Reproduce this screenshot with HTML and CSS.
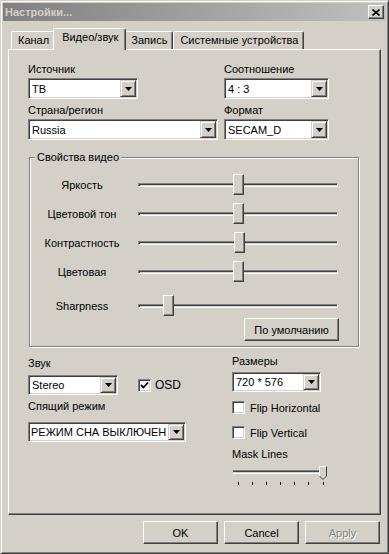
FILE: index.html
```html
<!DOCTYPE html>
<html lang="ru">
<head>
    <meta charset="UTF-8">
    <title>Настройки...</title>
    <link rel="stylesheet" href="styles.css">
</head>
<body>
    <div class="window">
        <!-- Title bar -->
        <div class="titlebar">
            <span class="title">Настройки...</span>
            <div class="close-btn">
                <svg width="8" height="7" viewBox="0 0 8 7"><path d="M0.5 0.5 L7.5 6.5 M7.5 0.5 L0.5 6.5" stroke="#000" stroke-width="1.6"/></svg>
            </div>
        </div>

        <!-- Tabs -->
        <div class="tabs">
            <div class="tab">Канал</div>
            <div class="tab active">Видео/звук</div>
            <div class="tab">Запись</div>
            <div class="tab">Системные устройства</div>
        </div>

        <div class="panel">
            <div class="top-fields">
                <div class="field">
                    <div class="label">Источник</div>
                    <div class="combo w-src"><span class="combo-text">ТВ</span><span class="combo-btn"><svg width="7" height="4"><polygon points="0,0 7,0 3.5,4" fill="#000"/></svg></span></div>
                </div>
                <div class="field">
                    <div class="label">Соотношение</div>
                    <div class="combo"><span class="combo-text">4 : 3</span><span class="combo-btn"><svg width="7" height="4"><polygon points="0,0 7,0 3.5,4" fill="#000"/></svg></span></div>
                </div>
                <div class="field">
                    <div class="label">Страна/регион</div>
                    <div class="combo"><span class="combo-text">Russia</span><span class="combo-btn"><svg width="7" height="4"><polygon points="0,0 7,0 3.5,4" fill="#000"/></svg></span></div>
                </div>
                <div class="field">
                    <div class="label">Формат</div>
                    <div class="combo"><span class="combo-text">SECAM_D</span><span class="combo-btn"><svg width="7" height="4"><polygon points="0,0 7,0 3.5,4" fill="#000"/></svg></span></div>
                </div>
            </div>

            <!-- Video properties -->
            <fieldset class="group">
                <legend>Свойства видео</legend>
                <div class="slider-row">
                    <span class="slider-label">Яркость</span>
                    <div class="slider"><div class="track"></div><div class="thumb" style="left: 95px"></div></div>
                </div>
                <div class="slider-row">
                    <span class="slider-label">Цветовой тон</span>
                    <div class="slider"><div class="track"></div><div class="thumb" style="left: 95px"></div></div>
                </div>
                <div class="slider-row">
                    <span class="slider-label">Контрастность</span>
                    <div class="slider"><div class="track"></div><div class="thumb" style="left: 96px"></div></div>
                </div>
                <div class="slider-row">
                    <span class="slider-label">Цветовая</span>
                    <div class="slider"><div class="track"></div><div class="thumb" style="left: 95px"></div></div>
                </div>
                <div class="slider-row last">
                    <span class="slider-label">Sharpness</span>
                    <div class="slider"><div class="track"></div><div class="thumb" style="left: 25px"></div></div>
                </div>
                <div class="group-footer">
                    <div class="btn btn-default">По умолчанию</div>
                </div>
            </fieldset>

            <div class="bottom">
                <div class="col-left">
                    <div class="label">Звук</div>
                    <div class="combo-row">
                        <div class="combo small w-sound"><span class="combo-text">Stereo</span><span class="combo-btn"><svg width="7" height="4"><polygon points="0,0 7,0 3.5,4" fill="#000"/></svg></span></div>
                        <div class="check-row osd">
                            <span class="checkbox"><svg width="9" height="9"><polyline points="1,4 3.5,6.5 8,1.5" fill="none" stroke="#000" stroke-width="1.8"/></svg></span>
                            <span>OSD</span>
                        </div>
                    </div>
                    <div class="label sleep-label">Спящий режим</div>
                    <div class="combo small w-sleep"><span class="combo-text">РЕЖИМ СНА ВЫКЛЮЧЕН</span><span class="combo-btn"><svg width="7" height="4"><polygon points="0,0 7,0 3.5,4" fill="#000"/></svg></span></div>
                </div>
                <div class="col-right">
                    <div class="label">Размеры</div>
                    <div class="combo small w-size"><span class="combo-text">720 * 576</span><span class="combo-btn"><svg width="7" height="4"><polygon points="0,0 7,0 3.5,4" fill="#000"/></svg></span></div>
                    <div class="check-row flip-h"><span class="checkbox"></span><span>Flip Horizontal</span></div>
                    <div class="check-row flip-v"><span class="checkbox"></span><span>Flip Vertical</span></div>
                    <div class="label mask-label">Mask Lines</div>
                    <svg class="mask-slider" width="96" height="21" viewBox="0 0 96 21" shape-rendering="crispEdges">
                        <rect x="1" y="5" width="92" height="1" fill="#808080"/>
                        <rect x="1" y="6" width="92" height="1" fill="#404040"/>
                        <rect x="1" y="7" width="92" height="1" fill="#d4d0c8"/>
                        <rect x="1" y="8" width="92" height="1" fill="#fff"/>
                        <polygon points="87,1 95,1 95,11 91,15 87,11" fill="#d4d0c8" shape-rendering="auto"/>
                        <polyline points="87.5,11 87.5,1.5 94.5,1.5" fill="none" stroke="#fff" stroke-width="1" shape-rendering="auto"/>
                        <polyline points="94.5,1.5 94.5,11 91,14.5 87.5,11" fill="none" stroke="#404040" stroke-width="1" shape-rendering="auto"/>
                        <g fill="#000">
                            <rect x="6" y="17" width="1" height="3"/>
                            <rect x="20" y="17" width="1" height="3"/>
                            <rect x="34" y="17" width="1" height="3"/>
                            <rect x="48" y="17" width="1" height="3"/>
                            <rect x="62" y="17" width="1" height="3"/>
                            <rect x="76" y="17" width="1" height="3"/>
                            <rect x="91" y="17" width="1" height="3"/>
                        </g>
                    </svg>
                </div>
            </div>
        </div>

        <!-- Dialog buttons -->
        <div class="dialog-buttons">
            <div class="btn">OK</div>
            <div class="btn">Cancel</div>
            <div class="btn disabled">Apply</div>
        </div>
    </div>
</body>
</html>
```

FILE: styles.css
```css
* {
    margin: 0;
    padding: 0;
    box-sizing: border-box;
}

body {
    background: #d4d0c8;
    font-family: 'Liberation Sans', Arial, sans-serif;
    font-size: 11px;
    color: #000;
}

/* Window frame */
.window {
    width: 389px;
    height: 554px;
    background: #d4d0c8;
    border: 1px solid;
    border-color: #d4d0c8 #404040 #404040 #d4d0c8;
    box-shadow: inset 1px 1px #fff, inset -1px -1px #808080;
    padding: 2px;
    display: flex;
    flex-direction: column;
}

/* Title bar */
.titlebar {
    height: 18px;
    flex: none;
    display: flex;
    align-items: center;
    padding-left: 2px;
    background: linear-gradient(to right, #808080, #c0c0c0);
}

.title {
    font-weight: bold;
    color: #d4d0c8;
    font-size: 11px;
}

.close-btn {
    margin-left: auto;
    margin-right: 2px;
    width: 16px;
    height: 14px;
    display: flex;
    align-items: center;
    justify-content: center;
    background: #d4d0c8;
    border: 1px solid;
    border-color: #fff #404040 #404040 #fff;
    box-shadow: inset -1px -1px #808080;
}

/* Tabs */
.tabs {
    display: flex;
    align-items: flex-end;
    height: 21px;
    margin: 7px 0 0 8px;
    flex: none;
}

.tab {
    height: 18px;
    line-height: 16px;
    padding: 0 5px 0 6px;
    border-top: 1px solid #fff;
    border-left: 1px solid #fff;
    border-right: 1px solid #404040;
    border-radius: 2px 2px 0 0;
    box-shadow: inset -1px 0 #808080;
    white-space: nowrap;
}

.tab.active {
    height: 22px;
    margin: 0 -2px -1px;
    padding: 0 7px 0 8px;
    position: relative;
    z-index: 1;
    background: #d4d0c8;
}

/* Tab panel */
.panel {
    flex: none;
    width: 373px;
    height: 466px;
    margin-left: 5px;
    border: 1px solid;
    border-color: #fff #404040 #404040 #fff;
    box-shadow: inset -1px -1px #808080;
    padding: 13px 0 0 19px;
}

.label {
    line-height: 13px;
    white-space: nowrap;
}

.top-fields {
    display: grid;
    grid-template-columns: 190px 105px;
    column-gap: 6px;
    row-gap: 5px;
}

.field .label {
    margin-bottom: 2px;
}

/* Combo boxes */
.combo {
    display: flex;
    height: 21px;
    width: 100%;
    background: #fff;
    border: 1px solid;
    border-color: #808080 #fff #fff #808080;
    box-shadow: inset 1px 1px #404040, inset -1px -1px #d4d0c8;
    padding: 1px;
}

.combo.small {
    height: 20px;
}

.combo-text {
    flex: 1;
    display: flex;
    align-items: center;
    padding-left: 2px;
    white-space: nowrap;
    overflow: hidden;
}

.combo-btn {
    width: 16px;
    flex: none;
    display: flex;
    align-items: center;
    justify-content: center;
    background: #d4d0c8;
    border: 1px solid;
    border-color: #d4d0c8 #404040 #404040 #d4d0c8;
    box-shadow: inset 1px 1px #fff, inset -1px -1px #808080;
}

.w-src { width: 110px; }
.w-sound { width: 90px; }
.w-sleep { width: 158px; }
.w-size { width: 89px; }

.w-sleep .combo-text {
    padding-left: 1px;
}

/* Group box */
.group {
    width: 330px;
    margin: 11px 0 0 1px;
    border: 1px solid #808080;
    box-shadow: inset 1px 1px #fff, 1px 1px #fff;
    padding: 10px 0 5px;
}

.group legend {
    margin-left: 5px;
    padding: 0 2px;
    line-height: 13px;
    background: #d4d0c8;
}

.slider-row {
    display: flex;
    align-items: center;
    height: 21px;
    margin-bottom: 8px;
}

.slider-row.last {
    margin-bottom: 2px;
}

.slider-row:nth-of-type(4) {
    margin-bottom: 13px;
}

.slider-label {
    width: 104px;
    text-align: center;
    white-space: nowrap;
}

.slider {
    position: relative;
    width: 200px;
    height: 21px;
    margin-left: 4px;
    display: flex;
    align-items: center;
}

.track {
    width: 100%;
    height: 4px;
    border: 1px solid;
    border-color: #808080 #fff #fff #808080;
    box-shadow: inset 1px 1px #404040;
    background: #d4d0c8;
}

.thumb {
    position: absolute;
    top: 0;
    width: 11px;
    height: 21px;
    background: #d4d0c8;
    border: 1px solid;
    border-color: #fff #404040 #404040 #fff;
    box-shadow: inset -1px -1px #808080;
}

.group-footer {
    display: flex;
    justify-content: flex-end;
    padding-right: 19px;
}

/* Buttons */
.btn {
    width: 75px;
    height: 23px;
    display: flex;
    align-items: center;
    justify-content: center;
    background: #d4d0c8;
    border: 1px solid;
    border-color: #fff #404040 #404040 #fff;
    box-shadow: inset -1px -1px #808080;
    white-space: nowrap;
}

.btn-default {
    width: 95px;
}

.btn.disabled {
    color: #808080;
    text-shadow: 1px 1px #fff;
}

/* Bottom part */
.bottom {
    display: grid;
    grid-template-columns: 204px 1fr;
    margin-top: 8px;
}

.col-left {
    padding-top: 2px;
}

.combo-row {
    display: flex;
    align-items: center;
    margin-top: 5px;
}

.check-row {
    display: flex;
    align-items: center;
    gap: 5px;
    height: 13px;
    white-space: nowrap;
}

.check-row.osd {
    margin-left: 20px;
    gap: 4px;
    font-size: 12px;
}

.checkbox {
    width: 13px;
    height: 13px;
    flex: none;
    display: flex;
    align-items: center;
    justify-content: center;
    background: #fff;
    border: 1px solid;
    border-color: #808080 #fff #fff #808080;
    box-shadow: inset 1px 1px #404040, inset -1px -1px #d4d0c8;
}

.sleep-label {
    margin-top: 5px;
    margin-bottom: 9px;
}

.col-right .label:first-child {
    margin-bottom: 4px;
}

.flip-h {
    margin-top: 9px;
}

.flip-v {
    margin-top: 12px;
}

.mask-label {
    margin-top: 9px;
}

.mask-slider {
    display: block;
    margin-top: 4px;
}

/* Dialog buttons */
.dialog-buttons {
    display: flex;
    justify-content: flex-end;
    gap: 6px;
    margin: 6px 6px 0 0;
    flex: none;
}
```
